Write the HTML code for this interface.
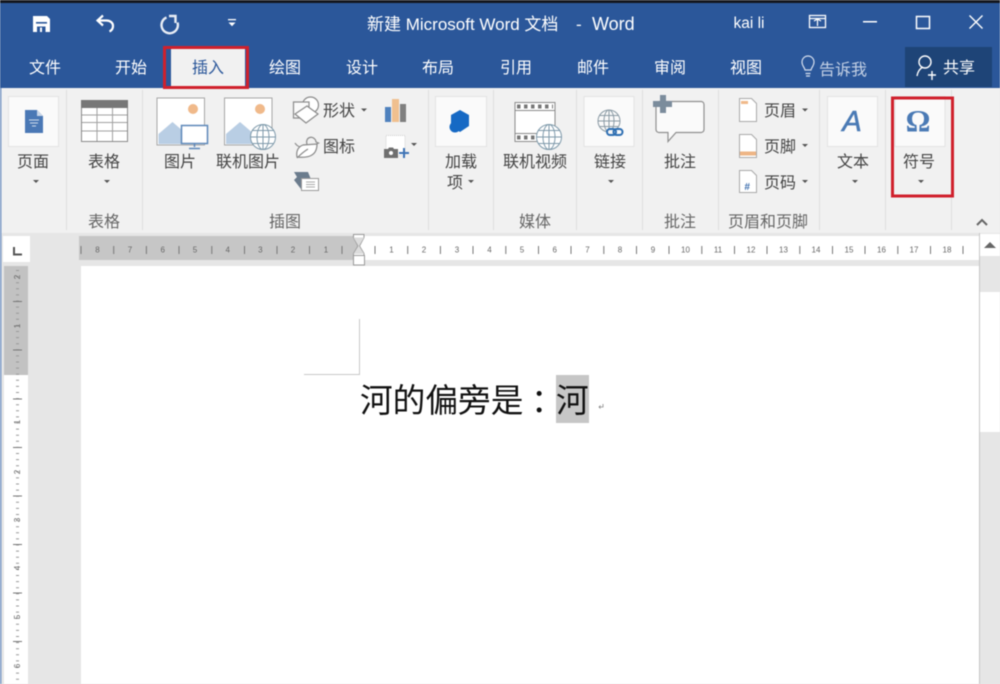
<!DOCTYPE html>
<html lang="zh"><head><meta charset="utf-8"><title>新建 Microsoft Word 文档 - Word</title>
<style>
html,body{margin:0;padding:0;background:#e6e6e6;width:1000px;height:684px;overflow:hidden}
svg{display:block;position:absolute;left:0;top:0;filter:blur(.5px)}
text{font-family:"Liberation Sans","Noto Sans CJK SC",sans-serif}
.t{fill:#fff;font-size:16px;text-anchor:middle}
.r{fill:#444;font-size:16px;text-anchor:middle}
.g{fill:#666;font-size:16px;text-anchor:middle}
.n{fill:#666;font-size:8px;text-anchor:middle}
.ns{fill:#666;font-size:8px;text-anchor:middle}
</style></head><body>
<svg width="1000" height="684" viewBox="0 0 1000 684" xmlns="http://www.w3.org/2000/svg">
<!-- base -->
<rect width="1000" height="684" fill="#e6e6e6"/>
<rect width="1000" height="88" fill="#2b579a"/>
<rect width="1000" height="3" fill="#14171f"/>
<rect x="0" y="88" width="1000" height="145" fill="#f1f1f1"/>
<rect x="0" y="88" width="1.500" height="596" fill="#7d9cc8"/>

<!-- QAT -->
<path d="M33 16h14l3 3v13H33z" fill="#fff"/><rect x="36" y="22" width="11" height="1.600" fill="#2b579a"/><rect x="37" y="26.500" width="8.500" height="5.500" fill="#2b579a"/><rect x="40" y="27.500" width="2" height="4.500" fill="#fff"/>
<path d="M103 15.500l-5.500 5 5.500 5M98 20.500h8.500c4 0 6.500 2.500 6.500 5.500 0 2.500-1.500 4.500-3.500 5.500" fill="none" stroke="#fff" stroke-width="2.200"/>
<path d="M166.500 17.500a8.200 8.200 0 1 0 11 5" fill="none" stroke="#e8edf5" stroke-width="2.400"/><path d="M169 16h6.500v7" fill="none" stroke="#e8edf5" stroke-width="2.400"/>
<rect x="228" y="19" width="8" height="1.300" fill="#fff"/><path d="M228.500 22.500h7l-3.500 3.800z" fill="#fff"/>

<!-- title -->
<text x="367" y="30" fill="#fff" font-size="17">新建 Microsoft Word 文档</text>
<text x="576" y="30" fill="#fff" font-size="17">-</text>
<text x="592" y="30" fill="#fff" font-size="18">Word</text>
<text x="749" y="28" fill="#fff" font-size="15.500" text-anchor="middle">kai li</text>

<!-- window controls -->
<rect x="809.500" y="15.500" width="16" height="12" fill="none" stroke="#fff" stroke-width="1.300"/><path d="M810 18.500h15M814 21l3.500-2 3.500 2M817.500 19v7" fill="none" stroke="#fff" stroke-width="1.200"/>
<rect x="863" y="21" width="14" height="1.500" fill="#fff"/>
<rect x="916.500" y="16.500" width="13" height="12" fill="none" stroke="#fff" stroke-width="1.500"/>
<path d="M969.500 15.500l13 13M982.500 15.500l-13 13" stroke="#fff" stroke-width="1.400"/>

<!-- tabs -->
<rect x="171" y="48" width="74" height="40" fill="#f1f1f1"/>
<rect x="905" y="47" width="87" height="40" fill="#1e4477"/>
<text class="t" x="45" y="73">文件</text>
<text class="t" x="131" y="73">开始</text>
<text class="t" x="208" y="73" style="fill:#2b579a">插入</text>
<text class="t" x="285" y="73">绘图</text>
<text class="t" x="362" y="73">设计</text>
<text class="t" x="438" y="73">布局</text>
<text class="t" x="516" y="73">引用</text>
<text class="t" x="593" y="73">邮件</text>
<text class="t" x="670" y="73">审阅</text>
<text class="t" x="746" y="73">视图</text>
<text class="t" x="843" y="75" style="fill:#c4d1e5">告诉我</text>
<text class="t" x="959" y="73">共享</text>
<path d="M805 70c0-2-3-4-3-8a6 6 0 0 1 12 0c0 4-3 6-3 8zM805.500 73.500h5M806 76h4" fill="none" stroke="#d6dfee" stroke-width="1.200"/>
<circle cx="925" cy="62" r="6" fill="none" stroke="#fff" stroke-width="1.400"/><path d="M917 76c1-6 4-8 6-9M928 75h8M932 71v9" fill="none" stroke="#fff" stroke-width="1.400"/>
<rect x="164.500" y="47.500" width="83" height="40" fill="none" stroke="#d0202c" stroke-width="3"/>

<!-- separators -->
<path d="M66.500 90v140M142.500 90v140M428.500 90v140M493.500 90v140M576.500 90v140M642.500 90v140M718.500 90v140M819.500 90v140M885.500 90v140M951.500 90v140" stroke="#dfdfdf" stroke-width="1"/>

<!-- big boxes -->
<g fill="#fafafa" stroke="#e3e3e3"><rect x="8.500" y="96.500" width="50" height="50"/><rect x="435.500" y="96.500" width="51" height="50"/><rect x="584" y="96.500" width="50" height="50"/><rect x="827.500" y="96.500" width="50" height="50"/><rect x="895" y="96.500" width="50" height="50"/></g>

<!-- page icon -->
<path d="M25 110h12l6 6v17H25z" fill="#4a78b5"/><path d="M37 110l6 6h-6z" fill="#c9d6e8"/><path d="M29 120h10M30 123h8M32 126h4" stroke="#cfdcec" stroke-width="1"/>
<!-- table -->
<rect x="81.500" y="100.500" width="46" height="41" fill="#fff" stroke="#8a8a8a"/><rect x="81" y="100" width="47" height="8" fill="#777"/><path d="M97 108v33M112.500 108v33M82 115h45M82 122.500h45M82 131h45" stroke="#a0a0a0"/>
<!-- picture 1 -->
<rect x="157" y="98" width="47.500" height="47" fill="#fff" stroke="#a6a6a6"/><circle cx="193" cy="109" r="5" fill="#f0b98a"/><path d="M158.500 144v-10l14-12 14 12 5 5v5z" fill="#b9cee4"/>
<rect x="181.500" y="125.500" width="26" height="18" fill="#fff" stroke="#5d87b9" stroke-width="1.500"/><path d="M194.500 144v3M189 148.500h11" stroke="#5d87b9" stroke-width="1.500"/>
<!-- picture 2 -->
<rect x="224.500" y="98" width="47.500" height="47" fill="#fff" stroke="#a6a6a6"/><circle cx="260" cy="109" r="5" fill="#f0b98a"/><path d="M226 144v-10l14-12 14 12 5 5v5z" fill="#b9cee4"/>
<g fill="#fff" stroke="#7f9aab" stroke-width="1"><circle cx="263" cy="137" r="12.500"/><ellipse cx="263" cy="137" rx="6" ry="12.500" fill="none"/><path d="M263 124.500v25M250.500 137h25M252.500 130.500h21M252.500 143.500h21" fill="none"/></g>
<!-- shapes -->
<circle cx="310.500" cy="105" r="8" fill="#fff" stroke="#8a8a8a" stroke-width="1.200"/>
<rect x="293.500" y="102" width="15.500" height="16" fill="#fafafa" stroke="#8a8a8a" stroke-width="1.200"/>
<path d="M307 106l11 8-12 9-11-9z" fill="#fff" stroke="#8a8a8a" stroke-width="1.200"/>
<!-- icons: bird+leaf -->
<path d="M295 143c3 5 9 5 12 2 0-2-1-3 0-5 1-2.500 4-3.500 6.500-2 1.500 1 2.500 2.500 2.500 4l2.500 1-3 1.500-1 3" fill="none" stroke="#8a8a8a" stroke-width="1.200"/><path d="M297 157c-1-6 1-10 6-12l14-1c0 6-2 10-7 12-4 1.500-8 1.500-13 1zM297 158c3-3 6-6 11-9" fill="#fff" stroke="#8a8a8a" stroke-width="1.200"/>
<!-- screenshot -->
<path d="M294 172h14l4 10h-7l-4 7-7-9 3-3z" fill="#6b7c8d"/><rect x="301.500" y="178.500" width="17" height="12" fill="#fff" stroke="#9a9a9a"/><path d="M306 182h9M306 184.500h9M306 187h9" stroke="#aaa"/>
<!-- chart -->
<rect x="385" y="107" width="6" height="15" fill="#4f81bd"/><rect x="392" y="99" width="7" height="23" fill="#f0c08f"/><rect x="400" y="104" width="6" height="18" fill="#7f7f7f"/>
<!-- screen clip -->
<rect x="386" y="135.500" width="19" height="20" fill="#fff" stroke="#cfcfcf" stroke-dasharray="1 1"/><path d="M384 149h4l1-1.500h4l1 1.500h4v9h-14z" fill="#6f6f6f"/><circle cx="391" cy="153" r="2" fill="#fff"/><path d="M404 148v10M399 153h10" stroke="#3e73b5" stroke-width="2"/>
<!-- add-in -->
<path d="M460 110l9 5v11l-9 6-9-6v-11z" fill="#1669c4"/><circle cx="455" cy="127" r="5.500" fill="#1669c4"/>
<!-- film -->
<rect x="515" y="102.500" width="40" height="39" fill="#fff" stroke="#8a8a8a"/><path d="M515 110.500h40M515 133.500h40" stroke="#8a8a8a"/><path d="M517 106.500h36M517 137.500h18" stroke="#777" stroke-width="4" stroke-dasharray="3.500 3.500"/>
<g fill="#fff" stroke="#7f9aab" stroke-width="1"><circle cx="549" cy="137" r="12.500"/><ellipse cx="549" cy="137" rx="6" ry="12.500" fill="none"/><path d="M549 124.500v25M536.500 137h25M538.500 130.500h21M538.500 143.500h21" fill="none"/></g>
<!-- link -->
<g fill="none" stroke="#8a9aa4" stroke-width="1"><circle cx="609" cy="121" r="11"/><ellipse cx="609" cy="121" rx="5" ry="11"/><path d="M609 110v22M598 121h22M600 115.500h18M600 126.500h18"/></g>
<rect x="607" y="129" width="9" height="6" rx="3" fill="#f5f5f5" stroke="#2e6fb2" stroke-width="2"/><rect x="613.500" y="129" width="9" height="6" rx="3" fill="none" stroke="#2e6fb2" stroke-width="2"/>
<!-- comment -->
<path d="M660 101.500h41a3 3 0 0 1 3 3v25a3 3 0 0 1-3 3h-25l-8 9v-9h-9a3 3 0 0 1-3-3v-25a3 3 0 0 1 3-3z" fill="#fafafa" stroke="#8f8f8f" stroke-width="1.200"/>
<path d="M663 95v18M653 104h19" stroke="#7b8c9c" stroke-width="6"/>
<!-- header/footer/pagenum -->
<path d="M739.500 98.500h12l5 5v18h-17z" fill="#fff" stroke="#a9a9a9"/><rect x="741" y="101" width="7" height="3" fill="#f0b98a"/>
<path d="M739.500 134.500h12l5 5v18h-17z" fill="#fff" stroke="#a9a9a9"/><rect x="740" y="151.500" width="16" height="4" fill="#eeb585"/>
<path d="M739.500 170.500h12l5 5v17h-17z" fill="#fff" stroke="#a9a9a9"/><text x="747" y="190" font-size="10" font-style="italic" font-weight="bold" fill="#3e6fae" text-anchor="middle">#</text>
<!-- A -->
<text x="852" y="131" font-size="29" font-style="italic" fill="#4a7ab5" stroke="#4a7ab5" stroke-width=".6" text-anchor="middle">A</text>
<!-- Omega -->
<text x="918" y="131" font-size="31" font-weight="bold" fill="#4a7ab5" text-anchor="middle" style="font-family:'Liberation Serif',serif">Ω</text>

<!-- labels -->
<text class="r" x="33" y="167">页面</text>
<text class="r" x="104" y="167">表格</text>
<text class="r" x="180" y="167">图片</text>
<text class="r" x="248" y="167">联机图片</text>
<text class="r" x="461" y="167">加载</text>
<text class="r" x="455" y="188">项</text>
<text class="r" x="535" y="167">联机视频</text>
<text class="r" x="610" y="167">链接</text>
<text class="r" x="680" y="167">批注</text>
<text class="r" x="853" y="167">文本</text>
<text class="r" x="919" y="167">符号</text>
<text class="r" x="339" y="116">形状</text>
<text class="r" x="339" y="152">图标</text>
<text class="r" x="780" y="116">页眉</text>
<text class="r" x="780" y="152">页脚</text>
<text class="r" x="780" y="188">页码</text>
<text class="g" x="104" y="227">表格</text>
<text class="g" x="285" y="227">插图</text>
<text class="g" x="535" y="227">媒体</text>
<text class="g" x="680" y="227">批注</text>
<text class="g" x="768" y="227">页眉和页脚</text>
<!-- carets -->
<g fill="#555"><path d="M33 180h6l-3 3z"/><path d="M104 180h6l-3 3z"/><path d="M468 180h6l-3 3z"/><path d="M608 180h6l-3 3z"/><path d="M852 180h6l-3 3z"/><path d="M918 180h6l-3 3z"/><path d="M361 108.500h6l-3 3z"/><path d="M411 143h6l-3 3z"/><path d="M802 108.500h6l-3 3z"/><path d="M802 144h6l-3 3z"/><path d="M802 180h6l-3 3z"/></g>
<path d="M977 225l5-5 5 5" fill="none" stroke="#666" stroke-width="2"/>
<rect x="892.500" y="98" width="60" height="98" fill="none" stroke="#d0202c" stroke-width="3"/>

<!-- hr -->
<rect x="79" y="236" width="901" height="24" fill="#fff"/>
<rect x="79" y="236" width="279" height="24" fill="#c6c6c6"/>
<path d="M81 246v8M113.700 246v8M146.400 246v8M179 246v8M211.800 246v8M244.500 246v8M277 246v8M309.500 246v8M342 246v8M375 246v8M407.700 246v8M440.400 246v8M473 246v8M505.800 246v8M538.500 246v8M571 246v8M603.800 246v8M636.500 246v8M669 246v8M701.800 246v8M734.500 246v8M767 246v8M799.800 246v8M832.500 246v8M865 246v8M897.800 246v8M930.500 246v8M963 246v8" stroke="#777" stroke-width="1"/>
<g><text class="n" x="97.500" y="252.500">8</text><text class="n" x="130" y="252.500">7</text><text class="n" x="162.700" y="252.500">6</text><text class="n" x="195" y="252.500">5</text><text class="n" x="227.700" y="252.500">4</text><text class="n" x="260.400" y="252.500">3</text><text class="n" x="293" y="252.500">2</text><text class="n" x="326" y="252.500">1</text><text class="n" x="391.500" y="252.500">1</text><text class="n" x="424" y="252.500">2</text><text class="n" x="457" y="252.500">3</text><text class="n" x="489.500" y="252.500">4</text><text class="n" x="522" y="252.500">5</text><text class="n" x="554.700" y="252.500">6</text><text class="n" x="587.500" y="252.500">7</text><text class="n" x="620" y="252.500">8</text><text class="n" x="653" y="252.500">9</text><text class="n" x="685.500" y="252.500">10</text><text class="n" x="718" y="252.500">11</text><text class="n" x="751" y="252.500">12</text><text class="n" x="783.500" y="252.500">13</text><text class="n" x="816" y="252.500">14</text><text class="n" x="849" y="252.500">15</text><text class="n" x="881.500" y="252.500">16</text><text class="n" x="914" y="252.500">17</text><text class="n" x="947" y="252.500">18</text></g>
<!-- markers -->
<path d="M353.500 234.500h10.500v3l-4.500 8.500 4.500 7.500v3h-10.500v-3l4.500-7.500-4.500-8.500z" fill="#fff" stroke="#9a9a9a"/><path d="M353.500 255.500h11v9.500h-11z" fill="#fff" stroke="#9a9a9a"/><path d="M353.500 237.500h10.500l-5 8.500 5 8h-10.500l5-8z" fill="#dcdcdc"/>

<!-- tab selector -->
<rect x="3" y="236" width="27" height="26" fill="#fff"/><path d="M14 247v7.500h8" fill="none" stroke="#555" stroke-width="2"/>
<!-- vruler -->
<rect x="4" y="266" width="24" height="418" fill="#fff"/><rect x="4" y="266" width="24" height="109" fill="#c2c2c2"/>
<path d="M17.500 270V684" stroke="#999" stroke-width="3" stroke-dasharray="1 5.100"/>
<path d="M13 301.500h9M13 350h9M13 399h9M13 447.500h9M13 496h9M13 544.500h9M13 593h9M13 641.500h9" stroke="#777"/>
<g><text class="ns" transform="translate(20 277) rotate(-90)">2</text><text class="ns" transform="translate(20 326) rotate(-90)">1</text><text class="ns" transform="translate(20 422) rotate(-90)">1</text><text class="ns" transform="translate(20 472) rotate(-90)">2</text><text class="ns" transform="translate(20 520) rotate(-90)">3</text><text class="ns" transform="translate(20 568) rotate(-90)">4</text><text class="ns" transform="translate(20 617) rotate(-90)">5</text><text class="ns" transform="translate(20 666) rotate(-90)">6</text></g>

<!-- page -->
<rect x="81" y="266" width="899" height="418" fill="#fff"/>
<path d="M359.500 319v55.500H304" fill="none" stroke="#c8c8c8"/>
<rect x="556" y="375" width="33" height="48" fill="#c6c6c6"/>
<text y="412" font-size="32.700" fill="#111" style="font-weight:400;font-family:'Liberation Sans','Noto Sans CJK SC',sans-serif"><tspan x="360">河的偏旁是</tspan><tspan x="531" style="font-family:'Noto Sans CJK TC',sans-serif">：</tspan><tspan x="556">河</tspan></text>
<path d="M603 404v3h-4M600.500 405.500L599 407l1.500 1.500" fill="none" stroke="#888" stroke-width=".8"/>

<!-- scrollbar -->
<rect x="979.500" y="233" width="20.500" height="451" fill="#e6e6e6"/>
<rect x="980" y="234" width="20" height="22" fill="#fff"/>
<path d="M984 248l6-6 6 6z" fill="#666"/>
<rect x="980" y="292" width="20" height="140" fill="#fff"/>
<path d="M979.500 233V684" stroke="#c6c6c6"/>
</svg>
</body></html>
